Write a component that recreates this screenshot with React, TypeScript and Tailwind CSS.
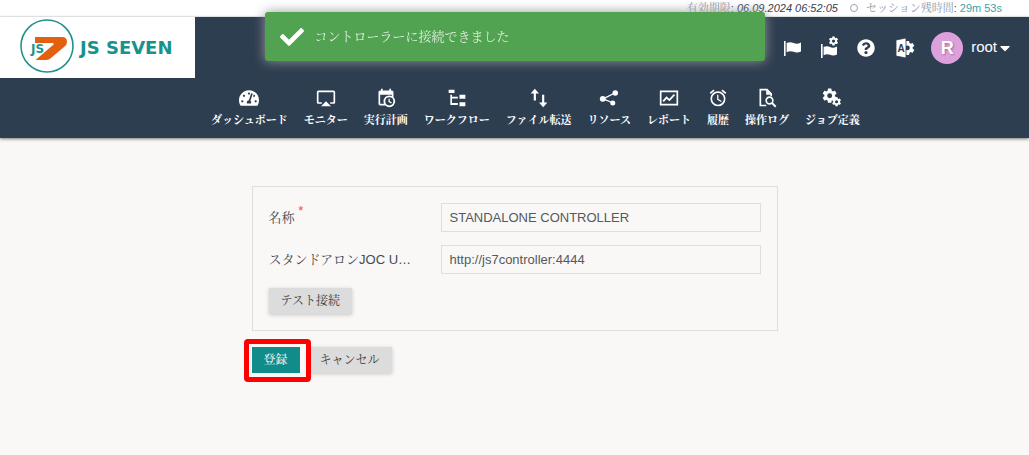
import React from 'react';
import { FaCaretDown, FaCheck, FaQuestionCircle, FaTachometerAlt } from 'react-icons/fa';
import { MdAirplay, MdAlarm } from 'react-icons/md';

function Svg({ children, className }: { children: React.ReactNode; className?: string }) {
  return (
    <svg viewBox="0 0 24 24" fill="currentColor" className={className ?? 'w-5 h-5'} aria-hidden="true">
      {children}
    </svg>
  );
}

const gearPath =
  'M12 15.5A3.5 3.5 0 0 1 8.5 12 3.5 3.5 0 0 1 12 8.5a3.5 3.5 0 0 1 3.5 3.5 3.5 3.5 0 0 1-3.5 3.5m7.43-2.53c.04-.32.07-.64.07-.97s-.03-.66-.07-1l2.11-1.63c.19-.15.24-.42.12-.64l-2-3.46c-.12-.22-.39-.31-.61-.22l-2.49 1c-.52-.39-1.06-.73-1.69-.98l-.37-2.65A.506.506 0 0 0 14 2h-4c-.25 0-.46.18-.5.42l-.37 2.65c-.63.25-1.17.59-1.69.98l-2.49-1c-.22-.09-.49 0-.61.22l-2 3.46c-.13.22-.07.49.12.64L4.57 11c-.04.34-.07.67-.07 1s.03.65.07.97l-2.11 1.66c-.19.15-.25.42-.12.64l2 3.46c.12.22.39.3.61.22l2.49-1.01c.52.4 1.06.74 1.69.99l.37 2.65c.04.24.25.42.5.42h4c.25 0 .46-.18.5-.42l.37-2.65c.63-.26 1.17-.59 1.69-.99l2.49 1.01c.22.08.49 0 .61-.22l2-3.46c.12-.22.07-.49-.12-.64z';

const navItems = [
  { label: 'ダッシュボード', icon: <FaTachometerAlt className="w-5 h-5" /> },
  { label: 'モニター', icon: <MdAirplay className="w-5 h-5" /> },
  {
    label: '実行計画',
    icon: (
      <Svg>
        <path d="M15 13h1.5v2.82l2.44 1.41-.75 1.3L15 16.69zm4-5H5v11h4.67A7 7 0 0 1 16 9c1.07 0 2.09.24 3 .68zM5 21a2 2 0 0 1-2-2V5c0-1.11.89-2 2-2h1V1h2v2h8V1h2v2h1a2 2 0 0 1 2 2v6.1A7 7 0 0 1 11.1 21zm11-9.85A4.85 4.85 0 1 0 16 20.85 4.85 4.85 0 0 0 16 11.15" />
      </Svg>
    ),
  },
  {
    label: 'ワークフロー',
    icon: (
      <Svg>
        <path d="M2 2h7v4H2zm13 6h7v5h-7zm0 9h7v5h-7zM4 8h2v2.500h7v2H6V18h7v2.500H4z" />
      </Svg>
    ),
  },
  {
    label: 'ファイル転送',
    icon: (
      <Svg>
        <path d="M7 1 2 6.500h3.700V15h2.600V6.500H12zm11.300 16.500V8h-2.600v9.500H12L17 23l5-5.500z" />
      </Svg>
    ),
  },
  {
    label: 'リソース',
    icon: (
      <Svg>
        <path d="M5 13 19 6M5 13l12 5" stroke="currentColor" strokeWidth="1.5" fill="none" />
        <circle cx="4.5" cy="13" r="3.5" />
        <circle cx="19.5" cy="6" r="3.3" />
        <circle cx="16.5" cy="18" r="3" />
      </Svg>
    ),
  },
  {
    label: 'レポート',
    icon: (
      <Svg>
        <path d="M1 3h22v18H1zm2 2v14h18V5z" fillRule="evenodd" />
        <path d="m5 16 4-4.5 3.5 3L18.5 8" stroke="currentColor" strokeWidth="2.2" fill="none" />
      </Svg>
    ),
  },
  { label: '履歴', icon: <MdAlarm className="w-5 h-5" /> },
  {
    label: '操作ログ',
    icon: (
      <Svg>
        <path d="M11 21H4V2h8l5 5v3" stroke="currentColor" strokeWidth="2" fill="none" />
        <path d="M11 2v6h6z" />
        <circle cx="15" cy="15" r="4" stroke="currentColor" strokeWidth="2" fill="none" />
        <path d="m18 18 4.5 4.5" stroke="currentColor" strokeWidth="2.2" />
      </Svg>
    ),
  },
  {
    label: 'ジョブ定義',
    icon: (
      <Svg>
        <path d={gearPath} transform="translate(-1 -1) scale(.85)" />
        <path d={gearPath} transform="translate(11 10) scale(.54)" />
      </Svg>
    ),
  },
];

function Logo() {
  return (
    <a href="#" className="flex items-center w-[195px] h-[61px] pl-5 pb-1 gap-[6px] bg-white shrink-0" aria-label="JS SEVEN">
      <svg viewBox="0 0 54 54" className="w-[54px] h-[54px]">
        <circle cx="27" cy="27" r="26" fill="white" stroke="#21938b" strokeWidth="1.6" />
        <path d="M15 18h27q5 0 5 5 0 3-3 5L31 39q-2 2-5 2H15.500L33 26q2-2-1-2H15z" fill="#e3600f" />
        <text x="11" y="34" fontSize="12" fontWeight="bold" fontFamily="DejaVu Sans" fill="#21938b" stroke="white" strokeWidth="1" paintOrder="stroke">
          JS
        </text>
      </svg>
      <span className="pt-1 font-['DejaVu_Sans'] font-bold text-lg leading-5 text-[#17928b] whitespace-nowrap">JS SEVEN</span>
    </a>
  );
}

function SessionBar() {
  return (
    <div className="flex justify-end items-center h-[17px] pr-[27px] bg-white text-[11px] leading-4 text-[#8d9bab] border-b border-gray-100">
      <span>
        有効期限<span className="text-gray-700">: <i>06.09.2024 06:52:05</i></span>
      </span>
      <span className="w-2 h-2 ml-3 mr-2 rounded-full border border-gray-400" />
      <span>
        セッション残時間<span className="text-gray-700">: </span>
        <span className="text-[#3c9fac]">29m 53s</span>
      </span>
    </div>
  );
}

function UserTools() {
  return (
    <div className="flex items-center h-[61px] pr-[18px] text-white">
      <button aria-label="通知" className="mr-[18px]">
        <svg viewBox="0 0 19 18" className="w-[19px] h-[18px]" fill="currentColor">
          <path d="M1 2h1.600v15H1zM3.600 4q3.500-1.500 7 0t7.400-.6v9q-3.800 1.800-7.400.4t-7 .4z" />
        </svg>
      </button>
      <button aria-label="通知設定" className="mr-[18px]">
        <svg viewBox="0 0 19 26" className="w-[19px] h-[26px]" fill="currentColor">
          <path d="M1 9h1.600v14H1zM3.600 12q3.500-1.500 6.500 0t6.900-.6v8q-3.500 1.800-6.900.4t-6.500.4z" />
          <circle cx="13.500" cy="6" r="5.600" fill="#2e3e51" />
          <path d={gearPath} transform="translate(8 .5) scale(.46)" />
        </svg>
      </button>
      <button aria-label="ヘルプ" className="mr-5">
        <FaQuestionCircle className="w-[18px] h-[18px]" />
      </button>
      <button aria-label="言語" className="mr-4">
        <svg viewBox="0 0 20 20" className="w-5 h-5" fill="currentColor">
          <path d={gearPath} transform="translate(4 1.5) scale(.7)" />
          <path d="m1 2 10-2v20L1 18z" stroke="#2e3e51" strokeWidth=".8" />
          <text x="6" y="13.5" textAnchor="middle" fontSize="10" fontWeight="bold" fontFamily="Liberation Sans" fill="#2e3e51">
            A
          </text>
        </svg>
      </button>
      <button className="flex items-center text-[15px]">
        <span className="flex items-center justify-center w-8 h-8 mr-2 rounded-full bg-[#dda0dd] text-lg font-bold [text-shadow:1px_1px_2px_rgba(0,0,0,0.3)]">
          R
        </span>
        root
        <FaCaretDown className="w-3 h-4 ml-[2px]" />
      </button>
    </div>
  );
}

function Toast() {
  return (
    <div
      role="status"
      className="fixed top-3 left-1/2 -translate-x-1/2 z-10 flex items-center w-[500px] max-w-full h-[49px] pl-[14px] rounded-[3px] bg-[#51a351] text-[13px] text-white/80 shadow-[0_0_12px_#999999]"
    >
      <FaCheck className="w-[26px] h-6 mr-[10px] text-white" />
      コントローラーに接続できました
    </div>
  );
}

const inputClass = 'min-w-0 w-full h-[29px] px-2 border border-[#dedede] bg-transparent text-[13px] text-[#55595c] outline-none';
const greyButton = 'h-[26px] px-3 bg-[#dcdcdc] text-xs text-[#3a3a3a] shadow-[0_1px_4px_rgba(0,0,0,0.2)]';

export default function App() {
  return (
    <div className="min-h-screen bg-[#f9f8f7] font-['Liberation_Sans','Noto_Serif_CJK_JP','Noto_Sans_CJK_JP',sans-serif]">
      <SessionBar />
      <Toast />
      <header className="bg-[#2e3e51] shadow-[0_1px_3px_rgba(0,0,0,0.5)]">
        <div className="flex justify-between">
          <Logo />
          <UserTools />
        </div>
        <nav className="flex gap-4 h-[60px] pl-[211px] pt-[10px] text-white">
          {navItems.map((item) => (
            <a key={item.label} href="#" className="flex flex-col items-center gap-1 text-[11px] leading-4 font-bold whitespace-nowrap">
              {item.icon}
              <span>{item.label}</span>
            </a>
          ))}
        </nav>
      </header>
      <main className="max-w-[526px] mx-auto pt-12">
        <form onSubmit={(e) => e.preventDefault()}>
          <div className="p-4 border border-[#dedede] text-[13px] text-[#444b50]">
            <div className="grid grid-cols-[144px_1fr] gap-x-7 gap-y-[13px] items-center">
              <label htmlFor="name">
                名称 <sup className="text-[13px] text-[#e5534b]">*</sup>
              </label>
              <input id="name" className={inputClass} defaultValue="STANDALONE CONTROLLER" />
              <label htmlFor="url" className="whitespace-nowrap">
                スタンドアロンJOC U…
              </label>
              <input id="url" className={inputClass} defaultValue="http://js7controller:4444" />
            </div>
            <button type="button" className={`mt-[14px] ${greyButton}`}>
              テスト接続
            </button>
          </div>
          <div className="flex gap-2 mt-4">
            <div className="relative">
              <button type="submit" className="block h-[26px] px-3 bg-[#118c8b] text-xs text-white">
                登録
              </button>
              <span className="absolute -left-2 -right-[11px] -top-2 -bottom-[9px] border-[5px] border-[#fe0000] rounded-[4px] pointer-events-none z-10" />
            </div>
            <button type="button" className={greyButton}>
              キャンセル
            </button>
          </div>
        </form>
      </main>
    </div>
  );
}
